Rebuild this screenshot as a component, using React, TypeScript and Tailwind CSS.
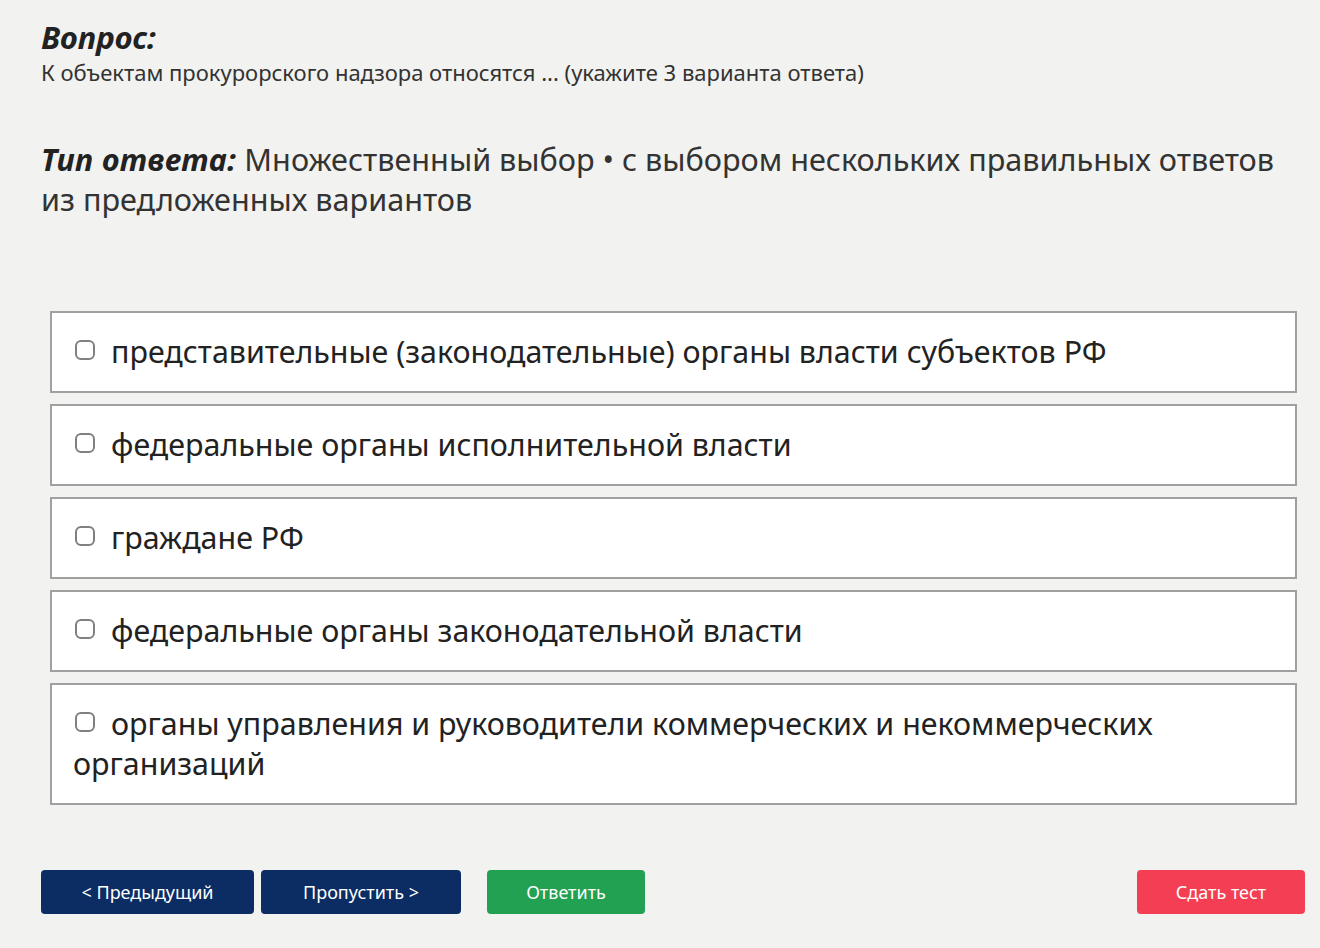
import { useState } from 'react';

const options = [
  'представительные (законодательные) органы власти субъектов РФ',
  'федеральные органы исполнительной власти',
  'граждане РФ',
  'федеральные органы законодательной власти',
  'органы управления и руководители коммерческих и некоммерческих организаций',
];

export default function App() {
  const [checked, setChecked] = useState<boolean[]>(options.map(() => false));

  const toggle = (i: number) => {
    setChecked((prev) => prev.map((v, idx) => (idx === i ? !v : v)));
  };

  return (
    <div className="min-h-[948px] bg-[#f2f2f0] text-[#222] font-['Noto_Sans','Open_Sans',sans-serif] pl-[41px] pr-[15px] pt-[18px]">
      {/* Question */}
      <h2 className="text-[31px] leading-[38px] font-bold italic">Вопрос:</h2>
      <p className="text-[22px] leading-[30px] text-[#333] mt-[1px]">
        К объектам прокурорского надзора относятся ... (укажите 3 варианта ответа)
      </p>

      {/* Answer type */}
      <p className="mt-[52px] text-[30.6px] leading-[40px] text-[#333]">
        <span className="font-bold italic text-[#222] tracking-[0.4px]">Тип ответа:</span> Множественный выбор • с выбором нескольких правильных ответов из предложенных вариантов
      </p>

      {/* Options */}
      <div className="mt-[92px] ml-[9px] mr-[8px] flex flex-col gap-[11px]">
        {options.map((opt, i) => (
          <label
            key={i}
            className="block bg-white border-2 border-[#a0a0a0] px-[21px] py-[19px] text-[30.4px] leading-[40px] text-[#222] cursor-pointer"
          >
            <span
              onClick={() => toggle(i)}
              className={`inline-block align-[3px] w-[20px] h-[20px] ml-[2px] mr-[16px] rounded-[6px] border-2 border-[#808080] ${checked[i] ? 'bg-[#0b2d63]' : 'bg-white'}`}
            />
            {opt}
          </label>
        ))}
      </div>

      {/* Buttons */}
      <div className="mt-[65px] flex items-center text-[18px] text-white">
        <button className="w-[213px] h-[44px] rounded-[4px] bg-[#0b2d63]">&lt; Предыдущий</button>
        <button className="ml-[7px] w-[200px] h-[44px] rounded-[4px] bg-[#0b2d63]">Пропустить &gt;</button>
        <button className="ml-[26px] w-[158px] h-[44px] rounded-[4px] bg-[#22a152]">Ответить</button>
        <button className="ml-auto w-[168px] h-[44px] rounded-[4px] bg-[#f43e54]">Сдать тест</button>
      </div>
    </div>
  );
}
